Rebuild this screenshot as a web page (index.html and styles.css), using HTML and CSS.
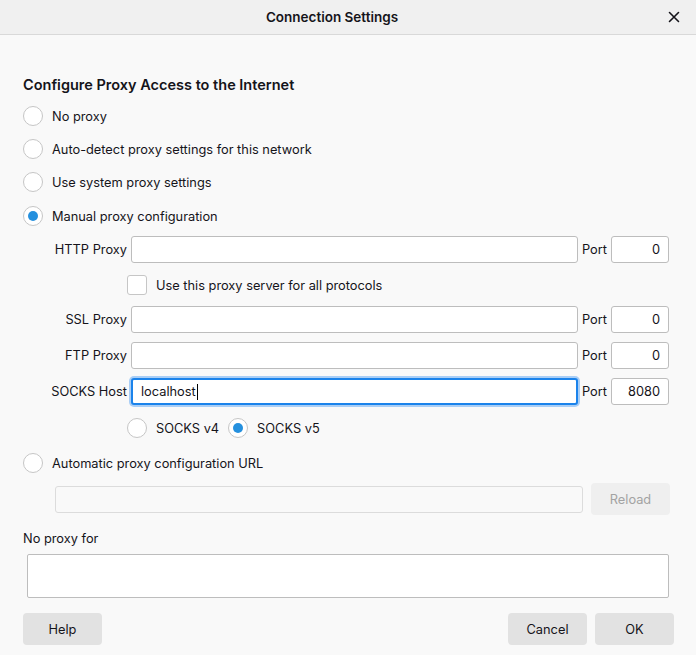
FILE: index.html
```html
<!DOCTYPE html>
<html>
<head>
<meta charset="utf-8">
<link rel="stylesheet" href="styles.css">
</head>
<body>
<div class="dialog">
  <div class="titlebar">
    <span class="title">Connection Settings</span>
    <span class="close">
      <svg width="12" height="12" viewBox="0 0 12 12"><path d="M1.5 1.5 L10.5 10.5 M10.5 1.5 L1.5 10.5" stroke="#15141a" stroke-width="1.6" stroke-linecap="round"/></svg>
    </span>
  </div>
  <div class="content">
    <div class="heading">Configure Proxy Access to the Internet</div>
    <div class="choice c1"><span class="radio"></span><span>No proxy</span></div>
    <div class="choice c2"><span class="radio"></span><span>Auto-detect proxy settings for this network</span></div>
    <div class="choice c2"><span class="radio"></span><span>Use system proxy settings</span></div>
    <div class="choice c3"><span class="radio checked"></span><span>Manual proxy configuration</span></div>

    <div class="proxygrid">
      <span class="plabel">HTTP Proxy</span>
      <span class="field"></span>
      <span class="port">Port</span>
      <span class="field num">0</span>

      <div class="choice allproto"><span class="checkbox"></span><span>Use this proxy server for all protocols</span></div>

      <span class="plabel">SSL Proxy</span>
      <span class="field"></span>
      <span class="port">Port</span>
      <span class="field num">0</span>

      <span class="plabel">FTP Proxy</span>
      <span class="field"></span>
      <span class="port">Port</span>
      <span class="field num">0</span>

      <span class="plabel">SOCKS Host</span>
      <span class="field focused">localhost<span class="caret"></span></span>
      <span class="port">Port</span>
      <span class="field num">8080</span>

      <div class="socks">
        <div class="choice"><span class="radio"></span><span>SOCKS v4</span></div>
        <div class="choice"><span class="radio checked"></span><span>SOCKS v5</span></div>
      </div>
    </div>

    <div class="choice c4"><span class="radio"></span><span>Automatic proxy configuration URL</span></div>
    <div class="urlrow">
      <span class="field disabled"></span>
      <span class="btn disabledbtn">Reload</span>
    </div>

    <div class="noproxy">No proxy for</div>
    <div class="textarea"></div>

    <div class="buttons">
      <span class="btn">Help</span>
      <span class="spacer"></span>
      <span class="btn">Cancel</span>
      <span class="btn">OK</span>
    </div>
  </div>
</div>
</body>
</html>
```

FILE: styles.css
```css
html, body {
  margin: 0;
  padding: 0;
}
body {
  width: 696px;
  height: 655px;
  background: #f9f9f9;
  font-family: Inter, "Noto Sans", "Liberation Sans", sans-serif;
  font-size: 12.8px;
  color: #15141a;
  overflow: hidden;
}
.titlebar {
  height: 34px;
  border-bottom: 1px solid #d9d9d9;
  background: #f0f0f0;
  display: flex;
  align-items: center;
  justify-content: center;
  position: relative;
}
.title {
  font-weight: 600;
  font-size: 13.5px;
  margin-left: -32px;
}
.close {
  position: absolute;
  right: 16px;
  top: 11px;
  width: 12px;
  height: 12px;
  display: flex;
}
.content {
  padding: 0 22px 0 23px;
  display: flex;
  flex-direction: column;
}
.heading {
  font-weight: 600;
  font-size: 14.5px;
  line-height: 20px;
  margin-top: 40px;
}
.choice {
  display: flex;
  align-items: center;
  height: 20px;
  gap: 9px;
  white-space: nowrap;
}
.c1 { margin-top: 11px; }
.c2 { margin-top: 13px; }
.c3 { margin-top: 14px; }
.c4 { margin-top: 15px; }
.radio {
  width: 20px;
  height: 20px;
  box-sizing: border-box;
  border: 1px solid #c6c6c6;
  border-radius: 50%;
  background: #fff;
  flex: none;
  display: flex;
  align-items: center;
  justify-content: center;
}
.radio.checked::after {
  content: "";
  width: 10px;
  height: 10px;
  border-radius: 50%;
  background: #2590de;
}
.checkbox {
  width: 20px;
  height: 20px;
  box-sizing: border-box;
  border: 1px solid #c6c6c6;
  border-radius: 3px;
  background: #fff;
  flex: none;
}
.proxygrid {
  margin-top: 10px;
  margin-right: 5px;
  display: grid;
  grid-template-columns: 104px 1fr auto 58px;
  column-gap: 4px;
  row-gap: 9px;
  align-items: center;
}
.allproto {
  grid-column: 2 / 5;
  margin: 3px 0 2px -4px;
}
.plabel {
  text-align: right;
  white-space: nowrap;
}
.field {
  height: 27px;
  box-sizing: border-box;
  border: 1px solid #bdbdbd;
  border-radius: 3px;
  background: #fff;
  display: flex;
  align-items: center;
  padding: 0 8px;
}
.num {
  justify-content: flex-end;
}
.port {
  white-space: nowrap;
}
.focused {
  border: 2px solid #1b83eb;
  box-shadow: 0 0 0 2px #a9cef6;
  padding-left: 8px;
}
.caret {
  display: inline-block;
  width: 1px;
  height: 16px;
  background: #000;
  margin-left: 1px;
}
.socks {
  grid-column: 2 / 5;
  display: flex;
  gap: 9px;
  margin-left: -4px;
  margin-top: 4px;
}
.urlrow {
  margin-top: 10px;
  margin-left: 32px;
  margin-right: 4px;
  display: flex;
  align-items: center;
  gap: 8px;
  height: 32px;
}
.urlrow .field {
  flex: 1;
  background: #f9f9f9;
  border-color: #dcdcdc;
}
.btn {
  height: 32px;
  width: 79px;
  box-sizing: border-box;
  border-radius: 4px;
  background: #e2e2e2;
  display: flex;
  align-items: center;
  justify-content: center;
  flex: none;
}
.disabledbtn {
  background: #efefef;
  color: #a3a3a3;
}
.noproxy {
  margin-top: 14px;
  line-height: 20px;
}
.textarea {
  margin: 5px 5px 0 4px;
  height: 44px;
  box-sizing: border-box;
  border: 1px solid #bdbdbd;
  border-radius: 2px;
  background: #fff;
}
.buttons {
  margin-top: 15px;
  display: flex;
  gap: 8px;
}
.spacer { flex: 1; }
```
